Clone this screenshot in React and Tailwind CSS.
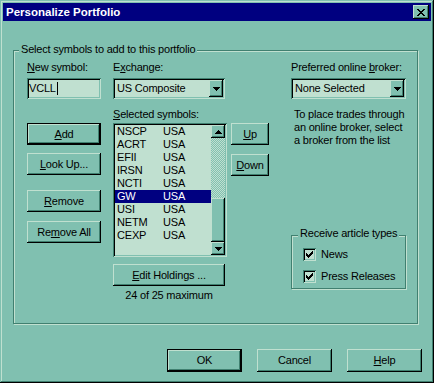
import React from 'react';

const raised = 'shadow-[inset_-1px_-1px_#000,inset_1px_1px_#c0e0d0,inset_-2px_-2px_#408070]';
const sunken = 'shadow-[inset_1px_1px_#408070,inset_-1px_-1px_#c0e0d0,inset_2px_2px_#000,inset_-2px_-2px_#80c0b0]';
const etched = 'border border-[#408070] shadow-[inset_1px_1px_#c0e0d0,1px_1px_#c0e0d0]';

const symbols = [
  ['NSCP', 'USA'],
  ['ACRT', 'USA'],
  ['EFII', 'USA'],
  ['IRSN', 'USA'],
  ['NCTI', 'USA'],
  ['GW', 'USA'],
  ['USI', 'USA'],
  ['NETM', 'USA'],
  ['CEXP', 'USA'],
];

const Btn = ({ children, def, className = '' }) => (
  <div
    className={`flex items-center justify-center bg-[#80c0b0] ${def ? 'border border-black' : ''} ${raised} ${className}`}
  >
    {children}
  </div>
);

const DownArrow = () => (
  <svg width="7" height="4" viewBox="0 0 7 4" shapeRendering="crispEdges">
    <rect x="0" y="0" width="7" height="1" fill="#000" />
    <rect x="1" y="1" width="5" height="1" fill="#000" />
    <rect x="2" y="2" width="3" height="1" fill="#000" />
    <rect x="3" y="3" width="1" height="1" fill="#000" />
  </svg>
);

const UpArrow = () => (
  <svg width="7" height="4" viewBox="0 0 7 4" shapeRendering="crispEdges">
    <rect x="3" y="0" width="1" height="1" fill="#000" />
    <rect x="2" y="1" width="3" height="1" fill="#000" />
    <rect x="1" y="2" width="5" height="1" fill="#000" />
    <rect x="0" y="3" width="7" height="1" fill="#000" />
  </svg>
);

const Check = () => (
  <svg width="7" height="7" viewBox="0 0 7 7" shapeRendering="crispEdges">
    <rect x="0" y="2" width="1" height="3" fill="#000" />
    <rect x="1" y="3" width="1" height="3" fill="#000" />
    <rect x="2" y="4" width="1" height="3" fill="#000" />
    <rect x="3" y="3" width="1" height="3" fill="#000" />
    <rect x="4" y="2" width="1" height="3" fill="#000" />
    <rect x="5" y="1" width="1" height="3" fill="#000" />
    <rect x="6" y="0" width="1" height="3" fill="#000" />
  </svg>
);

const Combo = ({ value, className = '' }) => (
  <div className={`flex items-center h-[21px] bg-[#c0e0d0] p-[2px] ${sunken} ${className}`}>
    <span className="flex-1 pl-[2px]">{value}</span>
    <div className={`flex items-center justify-center w-[14px] h-[17px] bg-[#80c0b0] ${raised}`}>
      <DownArrow />
    </div>
  </div>
);

const CheckRow = ({ label, className = '' }) => (
  <div className={`flex items-center ${className}`}>
    <div className={`flex items-center justify-center w-[13px] h-[13px] bg-[#c0e0d0] ${sunken}`}>
      <Check />
    </div>
    <span className="ml-[5px]">{label}</span>
  </div>
);

export default function App() {
  return (
    <div className="font-['Liberation_Sans',Arial,sans-serif] text-[11px] leading-[13px] tracking-[-0.2px] text-black">
      <div className="flex flex-col w-[434px] h-[383px] bg-[#80c0b0] p-[3px] shadow-[inset_-1px_-1px_#000,inset_1px_1px_#80c0b0,inset_-2px_-2px_#408070,inset_2px_2px_#c0e0d0]">
        {/* title bar */}
        <div className="flex items-center justify-between h-[18px] bg-[#000080] pl-[3px] pr-[2px]">
          <span className="text-white font-bold text-[11.5px] tracking-normal">Personalize Portfolio</span>
          <div className={`flex items-center justify-center w-[16px] h-[14px] bg-[#80c0b0] ${raised}`}>
            <svg width="8" height="7" viewBox="0 0 8 7" shapeRendering="crispEdges">
              <path d="M0 0h2v1h-2zM6 0h2v1h-2zM1 1h2v1h-2zM5 1h2v1h-2zM2 2h4v1h-4zM3 3h2v1h-2zM2 4h4v1h-4zM1 5h2v1h-2zM5 5h2v1h-2zM0 6h2v1h-2zM6 6h2v1h-2z" fill="#000" />
            </svg>
          </div>
        </div>

        {/* main group */}
        <div className={`relative ml-[10px] mt-[29px] w-[405px] h-[274px] ${etched}`}>
          <span className="absolute left-[5px] top-[-8px] px-[2px] bg-[#80c0b0]">
            Select symbols to add to this portfolio
          </span>

          <div className="flex items-start pl-[13px] pt-[10px]">
            {/* column A */}
            <div className="flex flex-col w-[74px]">
              <span>
                <span className="underline">N</span>ew symbol:
              </span>
              <div className={`flex items-center mt-[4px] h-[21px] bg-[#c0e0d0] pl-[2px] ${sunken}`}>
                <span>VCLL</span>
                <span className="w-px h-[13px] bg-black ml-[1px]" />
              </div>
              <Btn def className="mt-[24px] h-[22px]">
                <span className="underline">A</span>dd
              </Btn>
              <Btn className="mt-[8px] h-[22px]">
                <span>
                  <span className="underline">L</span>ook Up...
                </span>
              </Btn>
              <Btn className="mt-[15px] h-[22px]">
                <span>
                  <span className="underline">R</span>emove
                </span>
              </Btn>
              <Btn className="mt-[9px] h-[22px]">
                <span>
                  Re<span className="underline">m</span>ove All
                </span>
              </Btn>
            </div>

            {/* column B */}
            <div className="flex flex-col w-[114px] ml-[12px]">
              <span>
                E<span className="underline">x</span>change:
              </span>
              <Combo value="US Composite" className="mt-[4px] w-[112px]" />
              <span className="mt-[9px]">
                <span className="underline">S</span>elected symbols:
              </span>
              <div className={`flex mt-[2px] h-[134px] bg-[#c0e0d0] p-[2px] ${sunken}`}>
                <div className="flex-1 flex flex-col">
                  {symbols.map(([sym, ex]) => (
                    <div
                      key={sym}
                      className={`flex h-[13px] ${sym === 'GW' ? 'bg-[#000080] text-white' : ''}`}
                    >
                      <span className="w-[48px] pl-[2px]">{sym}</span>
                      <span>{ex}</span>
                    </div>
                  ))}
                </div>
                <div className="flex flex-col w-[14px]">
                  <div className={`flex items-center justify-center h-[13px] bg-[#80c0b0] ${raised}`}>
                    <UpArrow />
                  </div>
                  <div className="flex-1 bg-[image:repeating-conic-gradient(#c0e0d0_0%_25%,#80c0b0_0%_50%)] bg-[length:2px_2px]" />
                  <div className={`h-[44px] bg-[#80c0b0] ${raised}`} />
                  <div className={`flex items-center justify-center h-[13px] bg-[#80c0b0] ${raised}`}>
                    <DownArrow />
                  </div>
                </div>
              </div>
              <Btn className="mt-[7px] h-[22px] w-[112px]">
                <span>
                  <span className="underline">E</span>dit Holdings ...
                </span>
              </Btn>
              <span className="mt-[3px] w-[112px] text-center">24 of 25 maximum</span>
            </div>

            {/* column C */}
            <div className="flex flex-col w-[38px] ml-[4px] mt-[62px]">
              <Btn className="h-[22px]">
                <span className="underline">U</span>p
              </Btn>
              <Btn className="mt-[9px] h-[22px]">
                <span>
                  <span className="underline">D</span>own
                </span>
              </Btn>
            </div>

            {/* column D */}
            <div className="flex flex-col w-[115px] ml-[22px]">
              <span>
                Preferred online <span className="underline">b</span>roker:
              </span>
              <Combo value="None Selected" className="mt-[4px]" />
              <div className="mt-[9px] pl-[3px] flex flex-col">
                <span>To place trades through</span>
                <span>an online broker, select</span>
                <span>a broker from the list</span>
              </div>
              <div className={`relative mt-[88px] w-[115px] h-[54px] ${etched}`}>
                <span className="absolute left-[6px] top-[-9px] px-[2px] bg-[#80c0b0]">
                  Receive article types
                </span>
                <CheckRow label="News" className="ml-[11px] mt-[12px]" />
                <CheckRow label="Press Releases" className="ml-[11px] mt-[9px]" />
              </div>
            </div>
          </div>
        </div>

        {/* bottom buttons */}
        <div className="flex justify-end gap-[15px] mt-[25px] pr-[9px]">
          <Btn def className="w-[75px] h-[23px]">OK</Btn>
          <Btn className="w-[75px] h-[23px]">Cancel</Btn>
          <Btn className="w-[75px] h-[23px]">
            <span>
              <span className="underline">H</span>elp
            </span>
          </Btn>
        </div>
      </div>
    </div>
  );
}
